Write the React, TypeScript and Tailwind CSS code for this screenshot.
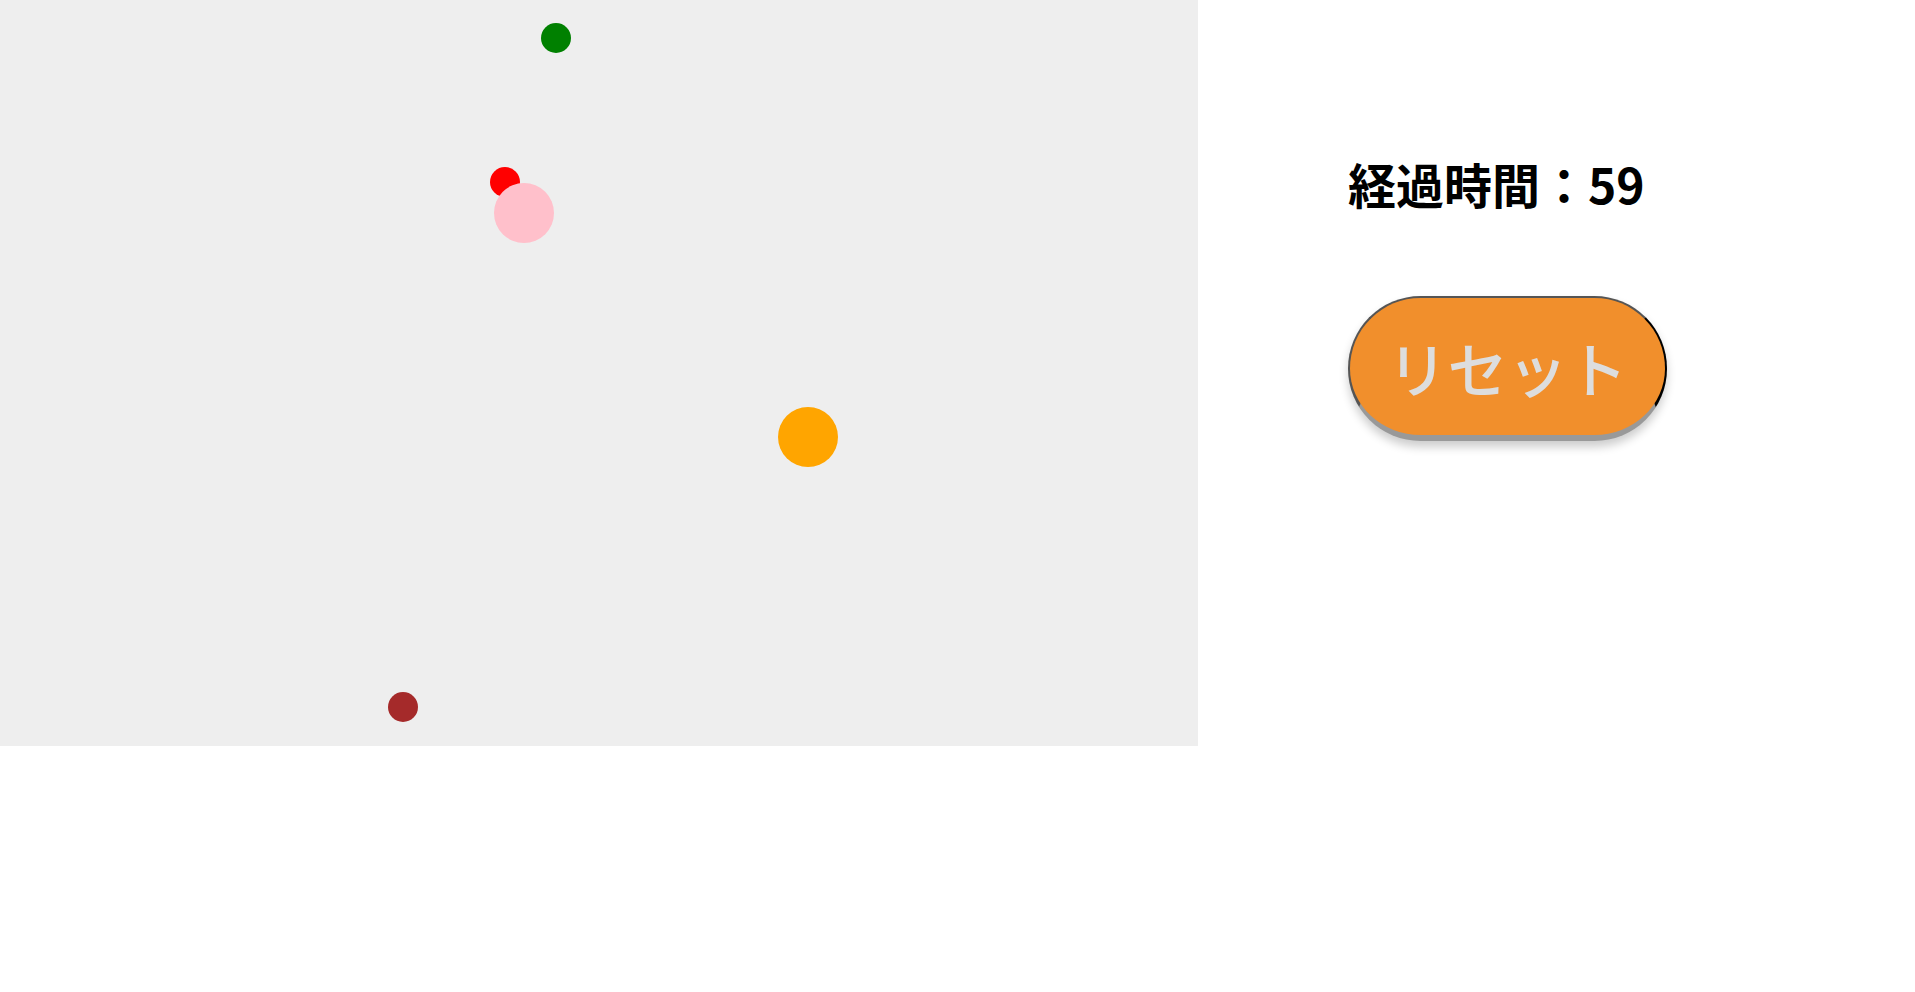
const balls = [
  { x: 556, y: 38, r: 15, color: "#008000" },
  { x: 505, y: 182, r: 15, color: "#ff0000" },
  { x: 524, y: 213, r: 30, color: "#ffc0cb" },
  { x: 808, y: 437, r: 30, color: "#ffa500" },
  { x: 403, y: 707, r: 15, color: "#a52a2a" },
]

export default function App() {
  return (
    <div className="flex items-start min-h-[992px] bg-white font-['Noto_Sans_CJK_JP',sans-serif]">
      {/* Field */}
      <div className="relative w-[1198px] h-[746px] shrink-0 bg-[#eeeeee] overflow-hidden">
        {balls.map((b, i) => (
          <div
            key={i}
            className="absolute rounded-full"
            style={{
              left: b.x - b.r,
              top: b.y - b.r,
              width: b.r * 2,
              height: b.r * 2,
              backgroundColor: b.color,
            }}
          />
        ))}
      </div>

      {/* Side panel */}
      <div className="flex flex-col items-start ml-[150px] pt-[150px]">
        <h1 className="text-[48px] font-bold leading-[1.4] text-black">経過時間：59</h1>
        <button
          type="button"
          className="mt-[79px] w-[319px] h-[145px] rounded-full bg-[#f18f2c] text-[60px] font-medium text-[#dddddd] border-solid border-t-2 border-l-2 border-r-2 border-b-[6px] border-t-[#555555] border-l-[#555555] border-r-black border-b-[#999999] shadow-[0_6px_10px_rgba(0,0,0,0.2)]"
        >
          リセット
        </button>
      </div>
    </div>
  )
}
